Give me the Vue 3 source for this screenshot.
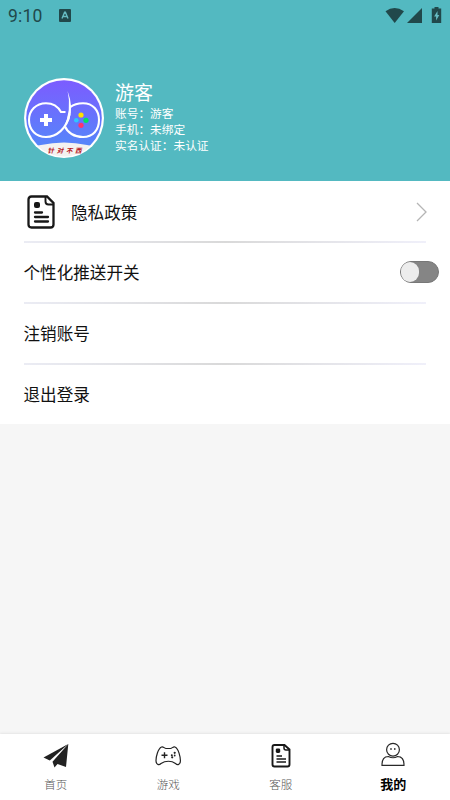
<script setup>
const tabs = [
  { id: 'home', label: '首页' },
  { id: 'game', label: '游戏' },
  { id: 'service', label: '客服' },
  { id: 'mine', label: '我的' },
]
const active = 'mine'
</script>

<template>
  <div class="page">
    <header class="header">
      <div class="status">
        <span class="time">9:10</span>
        <svg class="app-icon" width="12" height="13" viewBox="0 0 12 13">
          <rect width="12" height="13" rx="1" fill="#21484b" />
          <path d="M3 9.500 5.600 3.200h.8L9 9.500M4 7.500h4" fill="none" stroke="#67bcc3" stroke-width="1.400" />
        </svg>
        <svg class="signals" width="58" height="18" viewBox="0 0 58 18">
          <path d="M0.5 4.3Q9.5-2.5 19 4.3L9.7 16Z" fill="#21484b" />
          <path d="M37 1v15H22Z" fill="#21484b" />
          <path d="M49.5 0h4v1.5h2.7V16h-9.4V1.5h2.7Z" fill="#21484b" />
          <path d="m52.5 4-3.4 5.4h2v4l3.2-5.5h-1.8Z" fill="#67bcc3" />
        </svg>
      </div>
      <div class="profile">
        <svg class="avatar" width="80" height="80" viewBox="0 0 80 80">
          <defs>
            <linearGradient id="avatar-bg" x1="0" y1="0" x2="0" y2="1">
              <stop offset="0" stop-color="#7c5cff" />
              <stop offset="1" stop-color="#508cf9" />
            </linearGradient>
            <clipPath id="avatar-clip"><circle cx="40" cy="40" r="38.5" /></clipPath>
          </defs>
          <circle cx="40" cy="40" r="40" fill="#fff" />
          <circle cx="40" cy="40" r="37.8" fill="url(#avatar-bg)" />
          <path d="M0 71Q12 67.5 17 67Q40 62 63 67Q70 68 80 71V80H0Z" fill="#f3f2f0" clip-path="url(#avatar-clip)" />
          <g fill="none" stroke="#fff" stroke-width="2.1">
            <path d="M41.500 34H37C34 28.500 28.500 25.200 22 25.200C12 25.200 5 32.500 5 42C5 52 12 59 22 59C32 59 43 51 45.500 36" />
            <path d="M46.500 29Q51 25.200 59 25.200C69 25.200 75 32.500 75 42C75 52 69 59 59 59C50 59 43.500 54.500 41 48.500" />
          </g>
          <path d="M43.600 13Q49.500 29 45.500 41Q43 47 39.500 50.500Q48 32 43.600 13Z" fill="#fff" />
          <path d="M20 36h4v4h4v4h-4v4h-4v-4h-4v-4h4Z" fill="#fff" />
          <circle cx="57" cy="37" r="2.6" fill="#ffe100" />
          <circle cx="52.3" cy="42.3" r="2.3" fill="#2dc6ff" />
          <circle cx="62" cy="42.3" r="2.6" fill="#00df64" />
          <circle cx="57" cy="47.3" r="2.6" fill="#ff326f" />
          <text class="motto" x="23.500" y="74.500">针对不西</text>
        </svg>
        <div class="info">
          <div class="name">游客</div>
          <div>账号：游客</div>
          <div>手机：未绑定</div>
          <div>实名认证：未认证</div>
        </div>
      </div>
    </header>

    <main class="menu">
      <div class="row">
        <svg class="doc" width="28" height="34" viewBox="0 0 28 34">
          <path d="M4.500 1.500H20L26.500 8v21.500q0 3-3 3H4.500q-3 0-3-3V4.500q0-3 3-3Z" fill="none" stroke="#181818" stroke-width="2.300" />
          <path d="M18.500 2v4.500q0 3 3 3h4.500" fill="none" stroke="#181818" stroke-width="1.900" />
          <rect x="7" y="7" width="6" height="6" rx="2" fill="#181818" />
          <path d="M8 17.500h7M8 22h13M8 26.500h13" stroke="#181818" stroke-width="2.300" stroke-linecap="round" />
        </svg>
        <span class="label">隐私政策</span>
        <svg class="arrow" width="11" height="20" viewBox="0 0 11 20">
          <path d="m1 1 9 9-9 9" fill="none" stroke="#b5b5b5" stroke-width="1.300" />
        </svg>
      </div>
      <div class="row">
        <span>个性化推送开关</span>
        <span class="switch"><i></i></span>
      </div>
      <div class="row">注销账号</div>
      <div class="row">退出登录</div>
    </main>

    <nav class="tabbar">
      <div v-for="t in tabs" :key="t.id" class="tab" :class="{ active: t.id === active }">
        <svg width="28" height="28" viewBox="0 0 28 28">
          <template v-if="t.id === 'home'">
            <path d="M26.300 2 1.500 15.500 7.800 18.600Z" fill="#222" />
            <path d="M26.300 2 24 25 15.500 22 12.500 25.500 10.500 19.700Z" fill="#222" />
            <path d="M26.300 2 7.500 14.500 6 17.800Z" fill="#222" />
          </template>
          <g v-else-if="t.id === 'game'" fill="none" stroke="#222" stroke-width="1.200">
            <path d="M7.500 5C9 4 10.500 6.500 12 6.500H16.500C18 6.500 19.500 4 21 5C24.500 6.500 26.500 15 26.400 19C26.300 22.800 23.500 23.300 21.500 21.500C17.500 18.500 11.500 18.500 7 21.500C5 23.300 2.200 22.800 2 19C1.900 15 4 6.500 7.500 5Z" />
            <path d="M7.500 13.300h6M10.500 10.300v6" stroke-width="1.400" />
            <g fill="#222" stroke="none"><circle cx="17.800" cy="13.200" r="1" /><circle cx="20.700" cy="10.800" r="1.100" /><circle cx="18.200" cy="15.300" r="1.100" /><circle cx="20.700" cy="13.500" r=".9" /></g>
          </g>
          <g v-else-if="t.id === 'service'" fill="none" stroke="#181818" stroke-width="1.900">
            <path d="M7.500 3h10L22.500 7.500V22.500q0 2-2 2H7.500q-2 0-2-2V5q0-2 2-2Z" />
            <path d="M17 3.500v2.500q0 2 2 2h3" stroke-width="1.500" />
            <rect x="8.800" y="6.500" width="4.400" height="4.400" rx="1.300" fill="#181818" stroke="none" />
            <path d="M9.500 14h5.500M9.500 17h9.500M9.500 20h9.500" stroke-width="1.600" />
          </g>
          <g v-else fill="none" stroke="#292929" stroke-width="1.200">
            <circle cx="14" cy="7.700" r="6.400" />
            <path d="M12 6v2M15.800 6v2" />
            <path d="M9.500 14.500C5 14.500 3 17 3 23.400H25C25 17 23 14.500 18.500 14.500Q14 17 9.500 14.500Z" />
          </g>
        </svg>
        <span>{{ t.label }}</span>
      </div>
    </nav>
  </div>
</template>

<style>
body { margin: 0; }
</style>

<style scoped>
.page {
  width: 450px;
  height: 800px;
  display: flex;
  flex-direction: column;
  overflow: hidden;
  background: #f6f6f6;
  color: #111;
  font-family: "Noto Sans CJK SC", sans-serif;
}
.header { height: 181px; flex: none; background: #53b9c1; }
.status { height: 31px; display: flex; align-items: center; padding: 0 8px; }
.time { font: 400 17.500px/20px Roboto, sans-serif; color: #21484b; width: 51px; letter-spacing: 0.200px; }
.signals { margin-left: auto; margin-right: -1px; }
.profile { display: flex; padding: 47px 24px 0; }
.avatar { flex: none; }
.motto { font-size: 6.500px; font-weight: 700; font-style: italic; letter-spacing: 2.700px; fill: #b61420; }
.info { margin: 0 0 0 11px; color: #fff; font-size: 11.700px; line-height: 16px; }
.name { font-size: 19px; line-height: 27px; }
.menu { flex: none; height: 242px; padding-top: 1px; background: #fff; }
.row {
  height: 61px;
  box-sizing: border-box;
  margin: 0 24px 0 23.500px;
  display: flex;
  align-items: center;
  font-size: 16.600px;
  border-bottom: 2px solid transparent;
  border-image: linear-gradient(90deg, #ebecf4, #d9d9d9 50%, #f0f0fa) 1;
}
.row:nth-child(2), .row:nth-child(3) { padding-bottom: 1px; }
.row:last-child { border-image: none; border-bottom: 0; height: 58px; }
.doc { margin: 0 16px 0 3.500px; }
.arrow { margin-left: auto; margin-right: -1px; }
.switch {
  width: 39px;
  height: 22px;
  box-sizing: border-box;
  border: 1px solid #777;
  border-radius: 11px;
  background: #858585;
  margin-left: auto;
  margin-right: -12.500px;
}
.switch i { display: block; width: 18px; height: 20px; border-radius: 10px; background: #ededed; }
.tabbar {
  margin-top: auto;
  height: 66px;
  flex: none;
  display: flex;
  background: #fff;
  box-shadow: 0 -1px 2px #e5e5e5;
}
.tab {
  flex: 1;
  display: flex;
  flex-direction: column;
  align-items: center;
  padding: 8px 1px 0 0;
  font-size: 11.500px;
  font-weight: 300;
  line-height: 16px;
  color: #555;
}
.tab span { margin-top: 6px; }
.tab.active { color: #000; font-weight: 700; font-size: 13px; }
</style>
